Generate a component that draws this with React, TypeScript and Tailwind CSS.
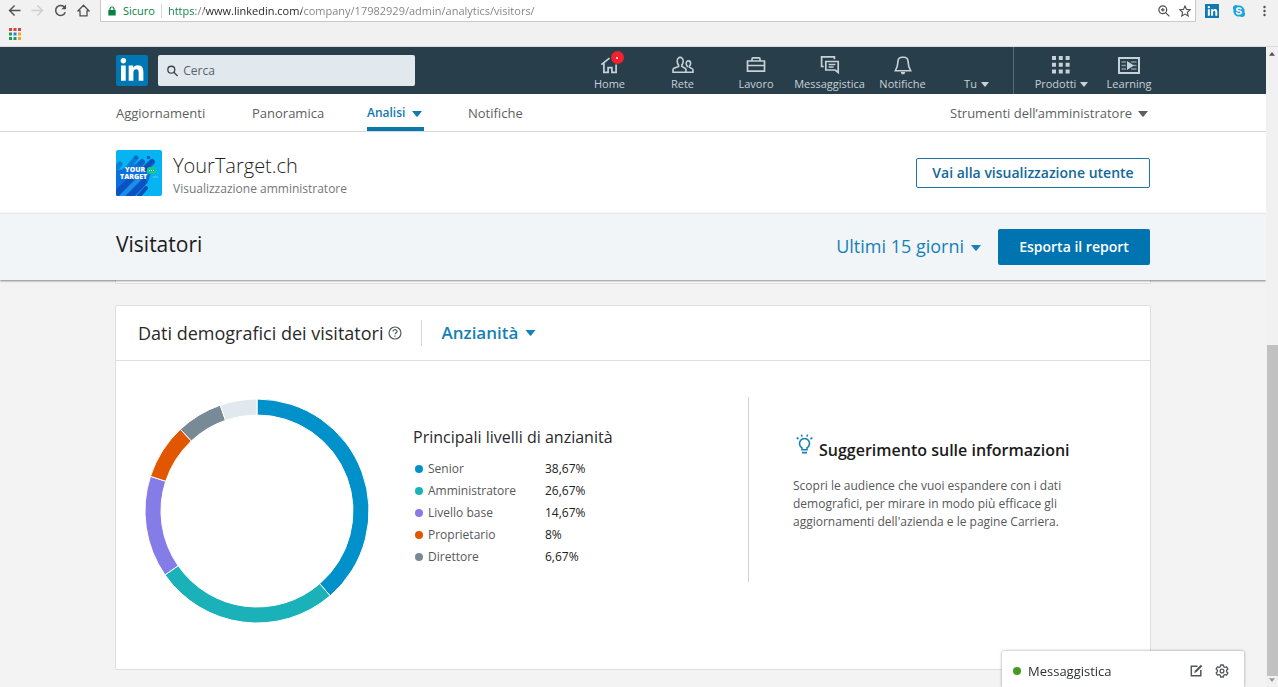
import React from "react";
import { FaLinkedinIn, FaSkype } from "react-icons/fa";

const chromeUrl = "https://www.linkedin.com/company/17982929/admin/analytics/visitors/";

type Slice = { label: string; value: number; text: string; color: string };

const slices: Slice[] = [
  { label: "Senior", value: 38.67, text: "38,67%", color: "#0091ca" },
  { label: "Amministratore", value: 26.67, text: "26,67%", color: "#1ab1b8" },
  { label: "Livello base", value: 14.67, text: "14,67%", color: "#867ce8" },
  { label: "Proprietario", value: 8, text: "8%", color: "#e25600" },
  { label: "Direttore", value: 6.67, text: "6,67%", color: "#788a96" },
];

function Caret({ className = "" }: { className?: string }) {
  return (
    <svg viewBox="0 0 10 6" className={`shrink-0 pointer-events-none ${className}`} fill="currentColor" aria-hidden="true">
      <path d="M0 0h10L5.6 5.4a.8.8 0 0 1-1.2 0z" />
    </svg>
  );
}

function BrowserBar() {
  return (
    <header className="shrink-0 bg-[#f1f1f1] border-b border-[#dcdcdc]">
      <div className="flex h-[22px] text-[#505050]">
        <div className="flex w-[100px] items-start gap-[10px] pl-[8px] pt-[4px]">
          <button aria-label="Indietro">
            <svg viewBox="0 0 13 13" className="size-[13px]" fill="none" stroke="#505050" strokeWidth="1.4">
              <path d="M12.5 6.5H1.8M6.6 1.4L1.5 6.5l5.1 5.1" />
            </svg>
          </button>
          <button aria-label="Avanti">
            <svg viewBox="0 0 13 13" className="size-[13px]" fill="none" stroke="#cfcfcf" strokeWidth="1.4">
              <path d="M.5 6.5h10.7M6.4 1.4l5.1 5.1-5.1 5.1" />
            </svg>
          </button>
          <button aria-label="Ricarica">
            <svg viewBox="0 0 13 13" className="size-[13px]" fill="none" stroke="#505050" strokeWidth="1.5">
              <path d="M11.3 8.3A5 5 0 1 1 10 2.7l1 1" />
              <path d="M12 .6v4.6H7.4z" fill="#505050" stroke="none" />
            </svg>
          </button>
          <button aria-label="Pagina iniziale">
            <svg viewBox="0 0 13 13" className="size-[13px]" fill="none" stroke="#505050" strokeWidth="1.3">
              <path d="M6.5 1.3L1.2 6.8H3v5h7v-5h1.8z" />
            </svg>
          </button>
        </div>
        <div className="flex flex-1 border-x border-b border-[#c9c9c9] bg-white pl-[7px] pr-[4px] items-center">
          <svg viewBox="0 0 8 10" className="mr-[7px] h-[10px] w-[8px]" aria-hidden="true">
            <path d="M2 4.5V3a2 2 0 0 1 4 0v1.5" fill="none" stroke="#0b8043" strokeWidth="1.2" />
            <rect x=".3" y="4" width="7.4" height="5.6" rx=".6" fill="#0b8043" />
          </svg>
          <span className="text-[11px] leading-4 text-[#0b8043]">Sicuro</span>
          <span className="mx-[6px] h-[14px] w-px bg-[#d5d5d5]" />
          <input
            aria-label="Barra degli indirizzi"
            defaultValue={chromeUrl}
            className="h-5 flex-1 bg-transparent bg-clip-text bg-[linear-gradient(90deg,#0b8043_28px,#808080_28px,#808080_36px,#222_36px,#222_134px,#808080_134px)] text-[11px] text-transparent outline-none"
          />
          <button aria-label="Zoom">
            <svg viewBox="0 0 12 12" className="size-3" fill="none" stroke="#505050" strokeWidth="1.2">
              <circle cx="4.8" cy="4.8" r="3.9" />
              <path d="M7.8 7.8l3.6 3.6M4.8 3v3.6M3 4.8h3.6" />
            </svg>
          </button>
          <button aria-label="Preferiti" className="ml-[9px]">
            <svg viewBox="0 0 12 12" className="size-3" fill="none" stroke="#505050" strokeWidth="1.1">
              <path d="M6 1l1.5 3.4 3.7.4-2.8 2.5.8 3.7L6 9.1 2.8 11l.8-3.7L.8 4.8l3.7-.4z" />
            </svg>
          </button>
        </div>
        <div className="flex w-[82px] items-center pl-[9px]">
          <a href="#linkedin" aria-label="LinkedIn" className="flex size-[14px] items-center justify-center bg-[#1178b3] text-white">
            <FaLinkedinIn size={11} />
          </a>
          <a href="#skype" aria-label="Skype" className="ml-[13px] text-[#1ba5df]">
            <FaSkype size={14} />
          </a>
          <button aria-label="Menu" className="ml-[17px]">
            <svg viewBox="0 0 3 12" className="h-3 w-[3px]" fill="#505050">
              <circle cx="1.5" cy="2" r="1.2" />
              <circle cx="1.5" cy="6" r="1.2" />
              <circle cx="1.5" cy="10" r="1.2" />
            </svg>
          </button>
        </div>
      </div>
      <div className="flex h-6 items-center pl-[9px]">
        <button aria-label="App">
          <svg viewBox="0 0 12 12" className="size-3">
            <path d="M0 0h3v3H0zM4.5 0h3v3h-3zM9 0h3v3H9z" fill="#d9453d" />
            <path d="M0 4.5h3v3H0z" fill="#1e9a58" />
            <path d="M4.5 4.5h3v3h-3z" fill="#3b78e0" />
            <path d="M9 4.5h3v3H9zM9 9h3v3H9z" fill="#e9a92a" />
            <path d="M0 9h3v3H0zM4.5 9h3v3h-3z" fill="#1e9a58" />
          </svg>
        </button>
      </div>
    </header>
  );
}

function NavItem({ label, caret, className, children }: { label: string; caret?: boolean; className: string; children?: React.ReactNode }) {
  return (
    <a href={`#${label.toLowerCase()}`} className={`flex flex-col items-center text-[#c7d1d8] ${className}`}>
      <span className="relative mt-[7px] flex h-[22px] items-center justify-center">{children}</span>
      <span className="flex items-center gap-1 whitespace-nowrap text-[11px] leading-4">
        {label}
        {caret && <Caret className="-mr-px h-[5px] w-2" />}
      </span>
    </a>
  );
}

function GlobalNav() {
  return (
    <nav className="bg-[#283e4a]" aria-label="Principale">
      <div className="mx-auto flex h-[47px] w-full max-w-[1034px]">
        <a href="#home" aria-label="LinkedIn" className="mt-2 flex h-[31px] w-8 items-center justify-center rounded-[2px] bg-[#0077b5] text-white">
          <FaLinkedinIn size={26} />
        </a>
        <label className="ml-[10px] mt-2 flex h-[31px] w-[257px] items-center rounded-[2px] bg-[#e1e9ee] pl-[9px]">
          <svg viewBox="0 0 12 12" className="size-3" fill="none" stroke="#37454e" strokeWidth="1.4" aria-hidden="true">
            <circle cx="4.6" cy="4.6" r="3.7" />
            <path d="M7.3 7.3l4 4" />
          </svg>
          <input
            aria-label="Cerca"
            placeholder="Cerca"
            className="ml-[5px] w-full bg-transparent text-xs text-[#37454e] outline-none placeholder:text-[#56636c] placeholder:opacity-100"
          />
        </label>
        <div className="ml-auto flex">
          <NavItem label="Home" className="w-[73px]">
            <svg viewBox="0 0 20 20" className="size-5" fill="none" stroke="currentColor" strokeWidth="1.7">
              <path d="M1.3 9.6L9.500 3.200M3.900 8.200v9.200h4.200v-4.800h3.800v4.800h4.200V9.500" />
            </svg>
            <span className="absolute -right-1 -top-[3px] flex size-[13px] items-center justify-center rounded-full bg-[#f4212f]">
              <span className="size-[2px] rounded-full bg-white" />
            </span>
          </NavItem>
          <NavItem label="Rete" className="w-[73px]">
            <svg viewBox="0 0 24 20" className="h-5 w-6" fill="none" stroke="currentColor" strokeWidth="1.6">
              <path d="M6.2 6a3 3.6 0 0 1 6 0c0 2-.7 3.300-1.400 4.100v1.300l3.200 1.800c.7.4 1 1 1 1.800v2.200H2v-2.200c0-.8.400-1.400 1-1.800l4.600-1.800v-1.300C6.900 9.300 6.200 8 6.200 6z" />
              <path d="M15.200 17.200h6.800v-2c0-.7-.4-1.300-1-1.600l-2.600-1.300V11c.7-.6 1.200-1.600 1.200-2.600 0-1.500-1-2.500-2.200-2.500-1.300 0-2.200 1-2.200 2.500 0 1 .4 2 1.100 2.600v1.300" />
            </svg>
          </NavItem>
          <NavItem label="Lavoro" className="w-[74px]">
            <svg viewBox="0 0 20 20" className="size-5" fill="none" stroke="currentColor" strokeWidth="1.7">
              <path d="M1.500 6h17v10.200h-17zM1.500 10.500h17M6 6V3.900c0-.6.400-1 1-1h6c.6 0 1 .4 1 1V6" />
            </svg>
          </NavItem>
          <NavItem label="Messaggistica" className="w-[73px]">
            <svg viewBox="0 0 20 20" className="size-5" fill="none" stroke="currentColor" strokeWidth="1.7">
              <path d="M3.800 11.500H1.600V1.800h12.800v2.400" />
              <path d="M5.800 6.500h12.400v11l-3-2.500H5.800zM8.600 9.500h6.800M8.600 12h5" />
            </svg>
          </NavItem>
          <NavItem label="Notifiche" className="w-[73px]">
            <svg viewBox="0 0 20 20" className="size-5" fill="none" stroke="currentColor" strokeWidth="1.600">
              <path d="M2.300 15.800h15.400l-1.900-4.300-.8-5.300a4.200 4.200 0 0 0-4.200-3.900H9.200A4.200 4.200 0 0 0 5 6.200l-.8 5.300z" />
              <path d="M7.600 17h4.800l-1.200 2.200H8.800z" fill="currentColor" stroke="none" />
            </svg>
          </NavItem>
          <NavItem label="Tu" caret className="w-[74px]" />
          <NavItem label="Prodotti" caret className="w-[95px] border-l border-[#56687a]">
            <svg viewBox="0 0 18 18" className="size-[18px]" fill="currentColor">
              <path d="M0 0h4v4H0zM6.800 0h4v4h-4zM13.600 0h4v4h-4zM0 6.800h4v4H0zM6.800 6.800h4v4h-4zM13.600 6.800h4v4h-4zM0 13.600h4v4H0zM6.800 13.600h4v4h-4zM13.600 13.600h4v4h-4z" />
            </svg>
          </NavItem>
          <NavItem label="Learning" className="w-[42px]">
            <svg viewBox="0 0 22 17" className="h-[17px] w-[22px]">
              <path d="M1 1h20v15H1z" fill="none" stroke="currentColor" strokeWidth="2" />
              <path d="M3.500 5h4.500M3.500 8.500h4.500M3.500 12h4.500M13 5h5.500M15 8.500h3.500M13 12h5.500" stroke="currentColor" strokeWidth="1.300" opacity=".6" />
              <path d="M9 4l7 4.500L9 13z" fill="currentColor" />
            </svg>
          </NavItem>
        </div>
      </div>
    </nav>
  );
}

function AdminTabs() {
  return (
    <nav className="border-b border-[#d6d9db] bg-white text-[13px] leading-5 text-[#5d5f61]" aria-label="Pagina">
      <div className="mx-auto flex h-[37px] w-full max-w-[1034px] items-stretch">
        <a href="#aggiornamenti" className="w-[136px] pt-[9px]">Aggiornamenti</a>
        <a href="#panoramica" className="w-[115px] pt-[9px]">Panoramica</a>
        <button className="mr-11 flex w-[57px] items-start justify-between border-b-4 border-[#0b78ab] pt-[9px] text-xs leading-5 font-semibold text-[#1179ad]">
          Analisi
          <Caret className="mr-[2px] mt-2 h-[6px] w-[10px]" />
        </button>
        <a href="#notifiche-pagina" className="pt-[9px]">Notifiche</a>
        <button className="ml-auto flex items-start gap-[6px] pr-[2px] pt-[9px]">
          Strumenti dell’amministratore
          <Caret className="mt-2 h-[6px] w-[10px]" />
        </button>
      </div>
    </nav>
  );
}

function CompanyLogo() {
  return (
    <div className="relative size-[46px] overflow-hidden rounded-[2px] bg-[#06b4f4]">
      <svg viewBox="0 0 46 46" className="size-full" strokeLinecap="round" aria-hidden="true">
        <path d="M-2 22L4 14M2 30L20 8" stroke="#0a7fd6" strokeWidth="5" />
        <path d="M4 34L26 12M10 36L36 12" stroke="#0d63cc" strokeWidth="6" />
        <path d="M-2 46V22l22-8 16 6-4 12-14 16z" fill="#0d6fdd" />
        <path d="M0 44L14 30M10 50L28 32" stroke="#0a52c4" strokeWidth="6" />
        <path d="M6 46l16-16" stroke="#1d8fe6" strokeWidth="4" />
        <path d="M23 46l7-8M28 20l8-9" stroke="#0d4fb4" strokeWidth="4" />
        <circle cx="20" cy="7.500" r="1.800" fill="#0b63b8" />
        <circle cx="32.500" cy="7.500" r="1.800" fill="#0b63b8" />
        <rect x="31" y="17" width="9" height="7" rx="2.500" fill="#13c98b" />
        <path d="M33.500 20.500h.1M35.500 20.500h.1M37.500 20.500h.1" stroke="#fff" strokeWidth="1" />
        <path d="M37.500 27h4" stroke="#45c3f2" strokeWidth="1.500" />
      </svg>
      <div className="absolute inset-x-0 top-4 flex flex-col pl-1 text-[7px] font-extrabold leading-[7px] text-white">
        <span className="pl-[5px]">YOUR</span>
        <span>TARGET</span>
      </div>
    </div>
  );
}

function CompanyHeader() {
  return (
    <section className="bg-white">
      <div className="mx-auto flex h-[81px] w-full max-w-[1034px] items-center">
        <CompanyLogo />
        <div className="ml-[11px] pt-2">
          <h1 className="text-xl font-light leading-6 text-[#1f1f1f]">YourTarget.ch</h1>
          <p className="mt-px text-xs leading-5 text-[#75777a]">Visualizzazione amministratore</p>
        </div>
        <button className="ml-auto h-[30px] w-[234px] rounded-[2px] border border-[#1b75a6] text-sm font-semibold text-[#12689a]">
          Vai alla visualizzazione utente
        </button>
      </div>
    </section>
  );
}

function ReportBar() {
  return (
    <section className="relative border-t border-[#e6e9ec] bg-[#f1f5f8] shadow-[0_1px_2px_rgba(0,0,0,0.45)]">
      <div className="mx-auto flex h-[66px] w-full max-w-[1034px] items-center">
        <h2 className="pb-[6px] text-[21px] leading-7 text-[#1b1b1b]">Visitatori</h2>
        <div className="ml-auto flex items-center pb-[2px] text-[#1581b5]">
          <select aria-label="Periodo" defaultValue="15" className="appearance-none bg-transparent text-lg leading-6 outline-none [field-sizing:content]">
            <option value="15">Ultimi 15 giorni</option>
            <option value="30">Ultimi 30 giorni</option>
          </select>
          <Caret className="ml-[7px] mt-[3px] h-[6px] w-[10px]" />
        </div>
        <button className="ml-[17px] h-9 w-[152px] rounded-[2px] bg-[#0073b1] text-sm font-semibold text-white">Esporta il report</button>
      </div>
    </section>
  );
}

function Donut() {
  const rest = 100 - slices.reduce((sum, s) => sum + s.value, 0);
  const all = [...slices.map((s) => ({ value: s.value, color: s.color })), { value: rest, color: "#e1e9ee" }];
  let start = 0;
  const point = (r: number, share: number) => {
    const a = (share / 100) * Math.PI * 2 - Math.PI / 2;
    return `${112 + r * Math.cos(a)} ${112 + r * Math.sin(a)}`;
  };
  return (
    <svg viewBox="0 0 224 224" className="size-56 shrink-0" role="img" aria-label="Livelli di anzianità dei visitatori">
      {all.map((s) => {
        const from = start;
        const to = start + s.value;
        start = to;
        return (
          <path
            key={s.color}
            d={`M${point(112, from)}A112 112 0 0 1 ${point(112, to)}L${point(96, to)}A96 96 0 0 0 ${point(96, from)}Z`}
            fill={s.color}
            stroke="#fff"
            strokeWidth="1"
          />
        );
      })}
    </svg>
  );
}

function DemographicsCard() {
  return (
    <section className="rounded-[2px] border border-[#dcdee0] bg-white">
      <div className="flex h-[55px] items-center border-b border-[#dcdee0] pl-[22px]">
        <h3 className="text-lg leading-6 text-[#2a2a2a]">Dati demografici dei visitatori</h3>
        <button aria-label="Informazioni" className="ml-[5px]">
          <svg viewBox="0 0 14 14" className="size-[14px]" fill="none" stroke="#55585a" strokeWidth="1.200">
            <circle cx="7" cy="7" r="6" />
            <path d="M4.900 5.600c.1-2.500 4.200-2.500 4.200-.2 0 1.300-2.100 1.400-2.100 2.900M7 9.400v1.300" />
          </svg>
        </button>
        <span className="ml-[19px] h-[26px] w-px bg-[#d5d8da]" />
        <div className="ml-[19px] flex items-center font-semibold text-[#1581b5]">
          <select aria-label="Dato demografico" defaultValue="anzianita" className="appearance-none bg-transparent text-[17px] leading-6 outline-none [field-sizing:content]">
            <option value="anzianita">Anzianità</option>
            <option value="funzione">Funzione</option>
          </select>
          <Caret className="ml-[7px] h-[6px] w-[11px]" />
        </div>
      </div>
      <div className="flex pb-[46px] pl-[29px] pt-9">
        <div className="pt-[2px]">
          <Donut />
        </div>
        <div className="ml-[44px] flex-1 pt-7">
          <h4 className="text-base leading-6 text-[#2a2a2a]">Principali livelli di anzianità</h4>
          <table className="mt-[9px] text-xs leading-[22px]">
            <tbody>
              {slices.map((s) => (
                <tr key={s.label}>
                  <th scope="row" className="w-[132px] p-0 text-left font-normal text-[#55585a]">
                    <span className="flex items-center pl-[2px]">
                      <span className="mr-[5px] size-2 rounded-full" style={{ backgroundColor: s.color }} />
                      {s.label}
                    </span>
                  </th>
                  <td className="p-0 text-[#222]">{s.text}</td>
                </tr>
              ))}
            </tbody>
          </table>
        </div>
        <aside className="h-[185px] w-[402px] border-l border-[#d0d3d5] pl-11 pt-9">
          <div className="flex items-start">
            <svg viewBox="0 0 18 22" className="ml-[2px] h-[22px] w-[18px]" fill="none" stroke="#1581b5" strokeWidth="1.600" aria-hidden="true">
              <path d="M7 16.800v-1.900a5 5 0 1 1 5 0v1.900z" />
              <path d="M7 19.600h5M7 3.600L6.500 1.600M12 3.600l.5-2M3.500 6L1.700 4.600M15.500 6l1.800-1.400" />
            </svg>
            <h4 className="ml-[6px] mt-[5px] text-base font-semibold leading-6 text-[#1b1b1b]">Suggerimento sulle informazioni</h4>
          </div>
          <p className="mt-[15px] w-[290px] text-xs leading-[18px] text-[#55585a]">
            Scopri le audience che vuoi espandere con i dati demografici, per mirare in modo più efficace gli aggiornamenti dell'azienda e le pagine Carriera.
          </p>
        </aside>
      </div>
    </section>
  );
}

function MessagingDock() {
  return (
    <div className="fixed bottom-0 right-[34px] flex h-9 w-[242px] items-center rounded-t-[2px] bg-white pl-[11px] pr-[15px] pt-[3px] shadow-[0_0_3px_rgba(0,0,0,0.4)]">
      <span className="size-2 rounded-full bg-[#469a1f]" />
      <button className="ml-[7px] flex-1 text-left text-[13px] leading-5 text-[#2f3133]">Messaggistica</button>
      <button aria-label="Nuovo messaggio">
        <svg viewBox="0 0 13 13" className="size-[13px]" fill="none" stroke="#55585a" strokeWidth="1.500">
          <path d="M7.500 2.200H1.300v9.500h9.500V6" />
          <path d="M4.200 9l.6-2.200 6-6 1.500 1.500-6 6z" fill="#55585a" stroke="none" />
        </svg>
      </button>
      <button aria-label="Impostazioni" className="ml-3">
        <svg viewBox="0 0 14 14" className="size-[14px]" fill="none" stroke="#55585a" strokeWidth="1.300" strokeLinejoin="round">
          <path d="M5.700 1h2.600l.4 1.700 1.200.7 1.700-.5 1.300 2.200L11.600 6.300v1.400l1.300 1.200-1.300 2.200-1.700-.5-1.200.7L8.300 13H5.700l-.4-1.700-1.200-.7-1.700.5-1.300-2.200 1.300-1.200V6.300L1.100 5.100l1.300-2.200 1.700.5 1.200-.7z" />
          <circle cx="7" cy="7" r="1.900" />
        </svg>
      </button>
    </div>
  );
}

export default function App() {
  return (
    <div className="flex h-screen flex-col bg-[#f3f3f3] font-['Open_Sans','Noto_Sans',sans-serif]">
      <BrowserBar />
      <div className="flex min-h-0 flex-1">
        <main className="min-w-0 flex-1 overflow-hidden">
          <GlobalNav />
          <AdminTabs />
          <CompanyHeader />
          <ReportBar />
          <div className="mx-auto w-full max-w-[1036px]">
            <div className="h-1 rounded-b-[2px] border border-t-0 border-[#dcdee0] bg-white" />
            <div className="pt-[21px]">
              <DemographicsCard />
            </div>
          </div>
        </main>
        <div className="flex w-3 flex-col items-center justify-between bg-[#f1f1f1] py-[5px]" aria-hidden="true">
          <Caret className="h-1 w-[6px] rotate-180 text-[#505050]" />
          <div className="mb-[2px] mt-auto h-[331px] w-[11px] bg-[#c1c1c1]" />
          <Caret className="h-1 w-[6px] text-[#9a9a9a]" />
        </div>
      </div>
      <MessagingDock />
    </div>
  );
}
